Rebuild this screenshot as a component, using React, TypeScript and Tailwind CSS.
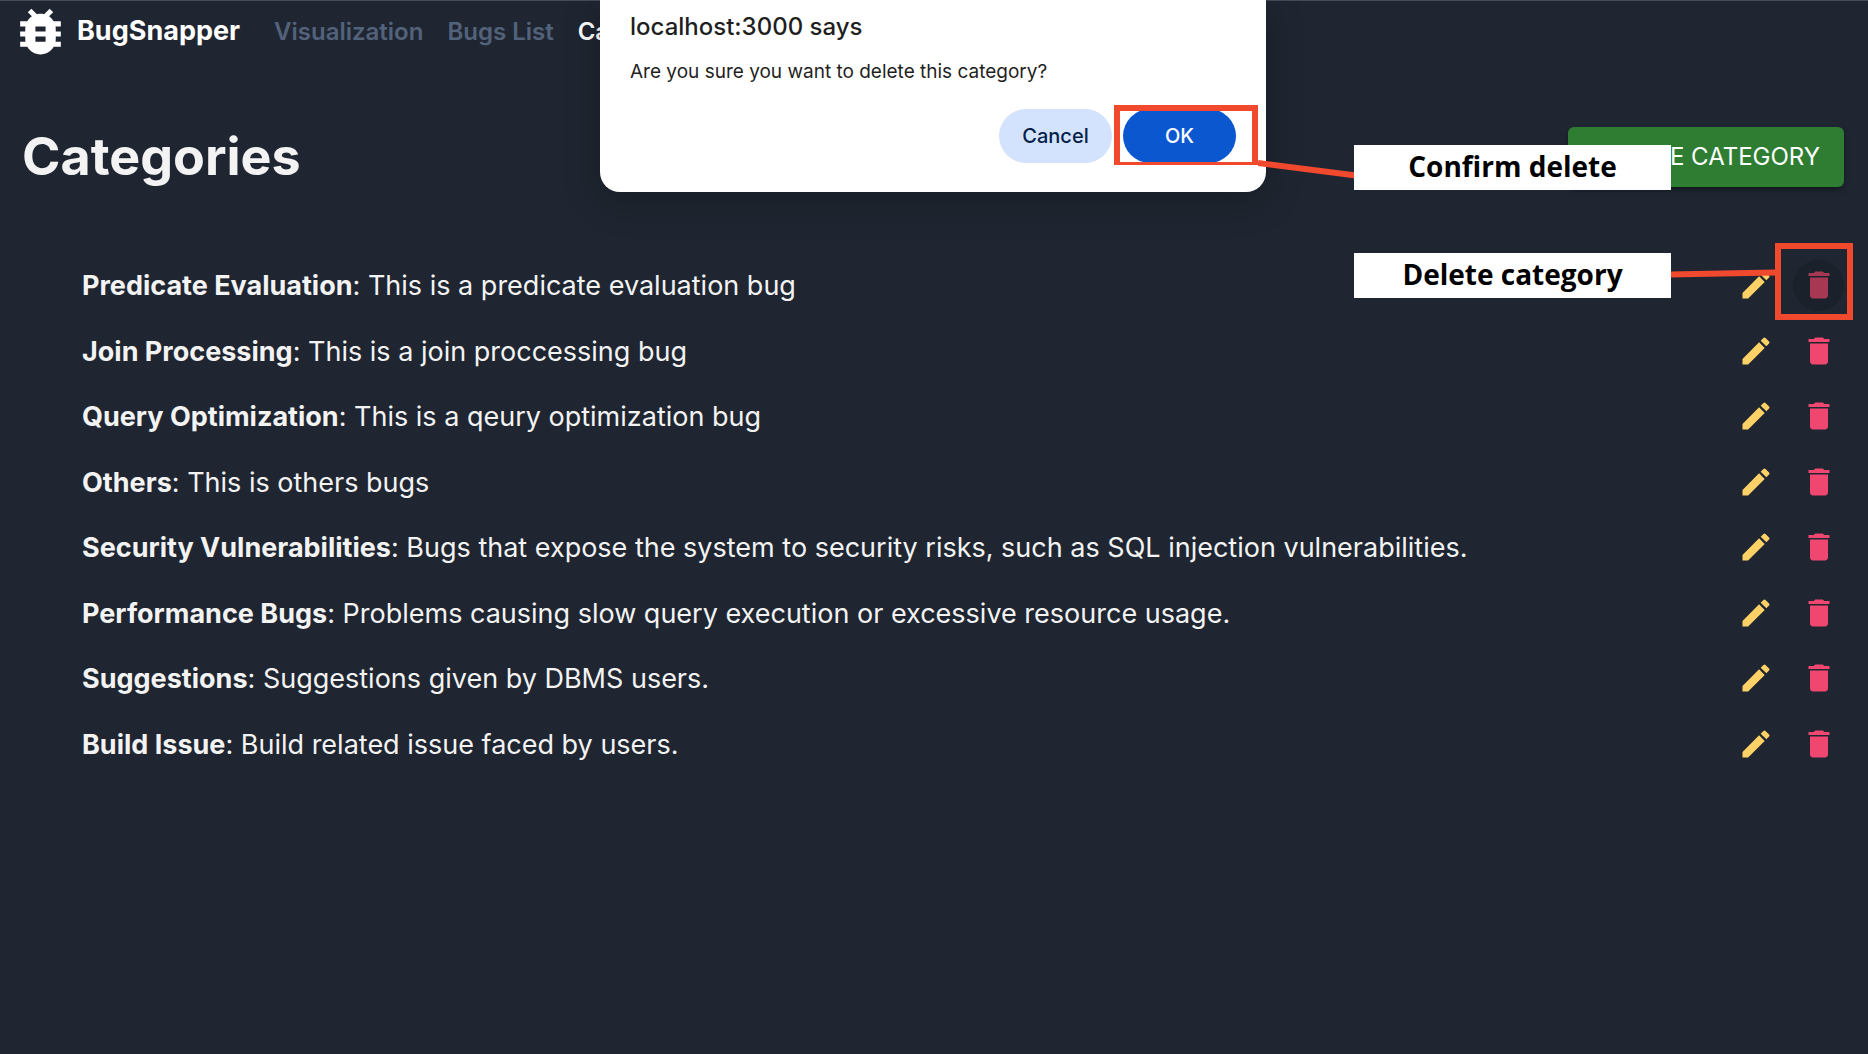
import { MdBugReport, MdDelete, MdEdit } from "react-icons/md";

type Category = { name: string; description: string };

const categories: Category[] = [
  { name: "Predicate Evaluation", description: "This is a predicate evaluation bug" },
  { name: "Join Processing", description: "This is a join proccessing bug" },
  { name: "Query Optimization", description: "This is a qeury optimization bug" },
  { name: "Others", description: "This is others bugs" },
  {
    name: "Security Vulnerabilities",
    description: "Bugs that expose the system to security risks, such as SQL injection vulnerabilities.",
  },
  { name: "Performance Bugs", description: "Problems causing slow query execution or excessive resource usage." },
  { name: "Suggestions", description: "Suggestions given by DBMS users." },
  { name: "Build Issue", description: "Build related issue faced by users." },
];

function Header() {
  return (
    <header className="flex h-[62px] items-center border-t border-[#424b58] pl-[10px]">
      <a href="#home" className="flex items-center gap-[6px] text-[27px] font-bold text-white">
        <MdBugReport className="size-[61px]" aria-hidden="true" />
        BugSnapper
      </a>
      <nav className="ml-[34px] flex gap-6 text-2xl font-semibold text-[#53627b]">
        <a href="#visualization">Visualization</a>
        <a href="#bugs">Bugs List</a>
        <a href="#categories" className="text-white">
          Categories
        </a>
      </nav>
    </header>
  );
}

function CategoryRow({ category, selected }: { category: Category; selected: boolean }) {
  return (
    <li className="flex items-center justify-between pt-3 pb-[13px] pr-6 pl-[82px]">
      <p className="text-[27px] leading-[1.5] text-[#f3f3f3] [font-feature-settings:'calt'_0]">
        <strong className="font-bold">{category.name}</strong>: {category.description}
      </p>
      <div className="-mt-[10px] -mb-2 flex gap-3">
        <button
          type="button"
          aria-label={`Edit ${category.name}`}
          className="flex size-[51px] items-center justify-center rounded-full text-[#ffd166]"
        >
          <MdEdit className="size-9" />
        </button>
        <div className="relative">
          <button
            type="button"
            aria-label={`Delete ${category.name}`}
            className={
              selected
                ? "flex size-[51px] items-center justify-center rounded-full bg-[#1b212a] text-[#a63853]"
                : "flex size-[51px] items-center justify-center rounded-full text-[#ef476f]"
            }
          >
            <MdDelete className="size-9" />
          </button>
          {selected && (
            <span className="absolute -top-[17px] -right-[9px] -bottom-[9px] -left-[18px] border-6 border-[#f0492e]" />
          )}
        </div>
      </div>
    </li>
  );
}

function ConfirmDialog() {
  return (
    <div
      role="dialog"
      aria-labelledby="dialog-title"
      className="absolute top-0 left-1/2 -ml-px w-[666px] -translate-x-1/2 rounded-b-[20px] bg-white px-[30px] pt-[9px] pb-[29px] text-[#1f1f1f] shadow-[0_8px_36px_rgba(0,0,0,0.25)]"
    >
      <h2 id="dialog-title" className="text-2xl leading-9 font-medium">
        localhost:3000 says
      </h2>
      <p className="mt-3 text-[19px] leading-[30px]">Are you sure you want to delete this category?</p>
      <div className="mt-[22px] flex justify-end gap-[11px] text-xl font-medium">
        <button type="button" className="h-[54px] w-[113px] rounded-full bg-[#d3e3fd] text-[#041e49]">
          Cancel
        </button>
        <div className="relative">
          <button type="button" className="h-[54px] w-[113px] rounded-full bg-[#0b57d0] text-white">
            OK
          </button>
          <span className="absolute -top-1 -right-[22px] -bottom-[2px] -left-[9px] border-6 border-b-3 border-[#f0492e]" />
        </div>
      </div>
    </div>
  );
}

function Annotations() {
  return (
    <div className="pointer-events-none absolute top-0 right-0 h-[320px] w-[610px] font-['Open_Sans',sans-serif] text-[28px] leading-9 font-bold text-black">
      <svg className="absolute inset-0" width="610" height="320" viewBox="0 0 610 320" fill="none" stroke="#f0492e" strokeWidth="6" aria-hidden="true">
        <path d="M0 163 L98 175.500" />
        <path d="M411 274.500 L518 272.500" />
      </svg>
      <div className="absolute top-[145px] left-24 h-[45px] w-[317px] bg-white pt-[3px] text-center">Confirm delete</div>
      <div className="absolute top-[253px] left-24 h-[45px] w-[317px] bg-white pt-[3px] text-center">Delete category</div>
    </div>
  );
}

export default function App() {
  return (
    <div className="relative min-h-screen overflow-hidden bg-[#1f2631] font-['Inter',sans-serif]">
      <Header />
      <main>
        <div className="flex items-center justify-between pt-16 pr-6 pl-[22px]">
          <h1 className="text-[52px] leading-[62px] font-bold text-[#f3f3f3]">Categories</h1>
          <button
            type="button"
            className="h-[60px] rounded-md bg-[#2e7d32] px-6 text-2xl font-normal text-white shadow-md shadow-black/30"
          >
            CREATE CATEGORY
          </button>
        </div>
        <ul className="mt-[66px]">
          {categories.map((category, index) => (
            <CategoryRow key={category.name} category={category} selected={index === 0} />
          ))}
        </ul>
      </main>
      <ConfirmDialog />
      <Annotations />
    </div>
  );
}
